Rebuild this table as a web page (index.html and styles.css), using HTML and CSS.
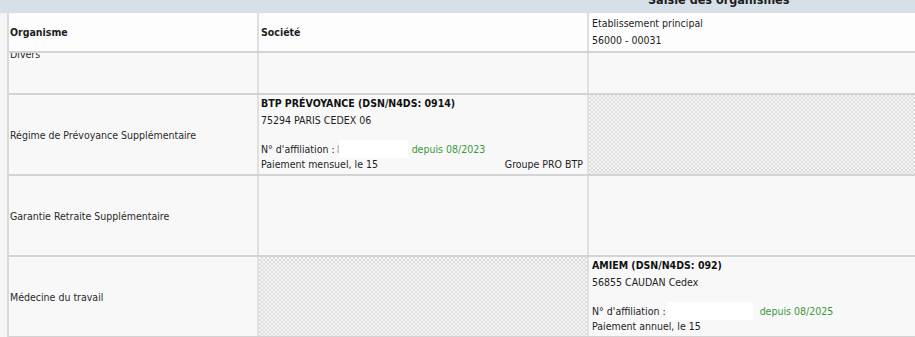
FILE: index.html
```html
<!DOCTYPE html>
<html lang="fr">
<head>
<meta charset="utf-8">
<title>Saisie des organismes</title>
<link rel="stylesheet" href="styles.css">
</head>
<body>
<div class="title"><span class="title-text">Saisie des organismes</span></div>
<div class="frame">
  <div class="row head">
    <div class="cell c1 center"><span class="hb">Organisme</span></div>
    <div class="cell c2 center"><span class="hb">Société</span></div>
    <div class="cell c3 center">
      <div class="hl">Etablissement principal</div>
      <div class="hl">56000 - 00031</div>
    </div>
  </div>
  <div class="clip">
    <div class="rows">
      <div class="row">
        <div class="cell c1 center">Divers</div>
        <div class="cell c2"></div>
        <div class="cell c3"></div>
      </div>
      <div class="row">
        <div class="cell c1 center">Régime de Prévoyance Supplémentaire</div>
        <div class="cell c2 info">
          <div class="l1">BTP PRÉVOYANCE (DSN/N4DS: 0914)</div>
          <div class="l2">75294 PARIS CEDEX 06</div>
          <div class="l3">N° d'affiliation :<span class="stub">8</span><span class="mask m1"></span><span class="since">depuis 08/2023</span></div>
          <div class="l4"><span>Paiement mensuel, le 15</span><span>Groupe PRO BTP</span></div>
        </div>
        <div class="cell c3 hatch"></div>
      </div>
      <div class="row">
        <div class="cell c1 center">Garantie Retraite Supplémentaire</div>
        <div class="cell c2"></div>
        <div class="cell c3"></div>
      </div>
      <div class="row">
        <div class="cell c1 center">Médecine du travail</div>
        <div class="cell c2 hatch"></div>
        <div class="cell c3 info">
          <div class="l1">AMIEM (DSN/N4DS: 092)</div>
          <div class="l2">56855 CAUDAN Cedex</div>
          <div class="l3">N° d'affiliation :<span class="mask m2"></span><span class="since s2">depuis 08/2025</span></div>
          <div class="l4"><span>Paiement annuel, le 15</span></div>
        </div>
      </div>
    </div>
  </div>
</div>
</body>
</html>
```
FILE: styles.css
```css
html, body {
  margin: 0;
  padding: 0;
  height: 337px;
  overflow: hidden;
  background: #f5f5f5;
  font-family: "DejaVu Sans Condensed", "DejaVu Sans", sans-serif;
  font-size: 10.5px;
  color: #2a2a2a;
}

.title {
  height: 13px;
  background: #d6e0e6;
  overflow: hidden;
  padding-left: 648px;
}

.title-text {
  display: block;
  margin-top: -8px;
  line-height: 16px;
  font-size: 12.5px;
  font-weight: bold;
  color: #1e1e1e;
  white-space: nowrap;
}

.frame {
  margin-left: 7px;
  border-left: 2px solid #d9d9d9;
}

.row {
  display: grid;
  grid-template-columns: 250px 330px 1fr;
  height: 81px;
  box-sizing: border-box;
  border-bottom: 2px solid #d3d3d3;
  background: #f8f8f8;
}

.row.head {
  height: 40px;
  background: #fdfdfd;
}

.cell {
  box-sizing: border-box;
  border-right: 2px solid #e0e0e0;
  min-width: 0;
}

.c1 { padding-left: 1px; }
.c2 { padding-left: 2px; padding-right: 4px; }
.c3 { padding-left: 3px; border-right: none; }

.center {
  display: flex;
  flex-direction: column;
  justify-content: center;
}

.hb {
  font-weight: bold;
  color: #1e1e1e;
}

.hl {
  line-height: 17px;
  color: #1e1e1e;
}

.clip {
  overflow: hidden;
}

.rows {
  margin-top: -39px;
}

.info {
  display: flex;
  flex-direction: column;
}

.l1 {
  line-height: 17px;
  font-weight: bold;
  color: #111;
}

.l2 {
  line-height: 17px;
  color: #1e1e1e;
}

.l3 {
  margin-top: 11px;
  height: 18px;
  display: flex;
  align-items: center;
  color: #1e1e1e;
  white-space: nowrap;
}

.l4 {
  line-height: 12px;
  display: flex;
  justify-content: space-between;
  color: #1e1e1e;
}

.stub {
  display: inline-block;
  width: 2px;
  margin-left: 2px;
  overflow: hidden;
  color: #9a9a9a;
}

.mask {
  display: inline-block;
  height: 18px;
  background: #ffffff;
}

.m1 { width: 69px; }
.m2 { width: 86px; margin-left: 1px; }

.since {
  color: #3a9a3a;
  margin-left: 4px;
}

.s2 { margin-left: 7px; }

.hatch {
  background-color: #efefef;
  background-image: repeating-conic-gradient(#dcdcdc 0 25%, #f5f5f5 0 50%);
  background-size: 4px 4px;
}
```
